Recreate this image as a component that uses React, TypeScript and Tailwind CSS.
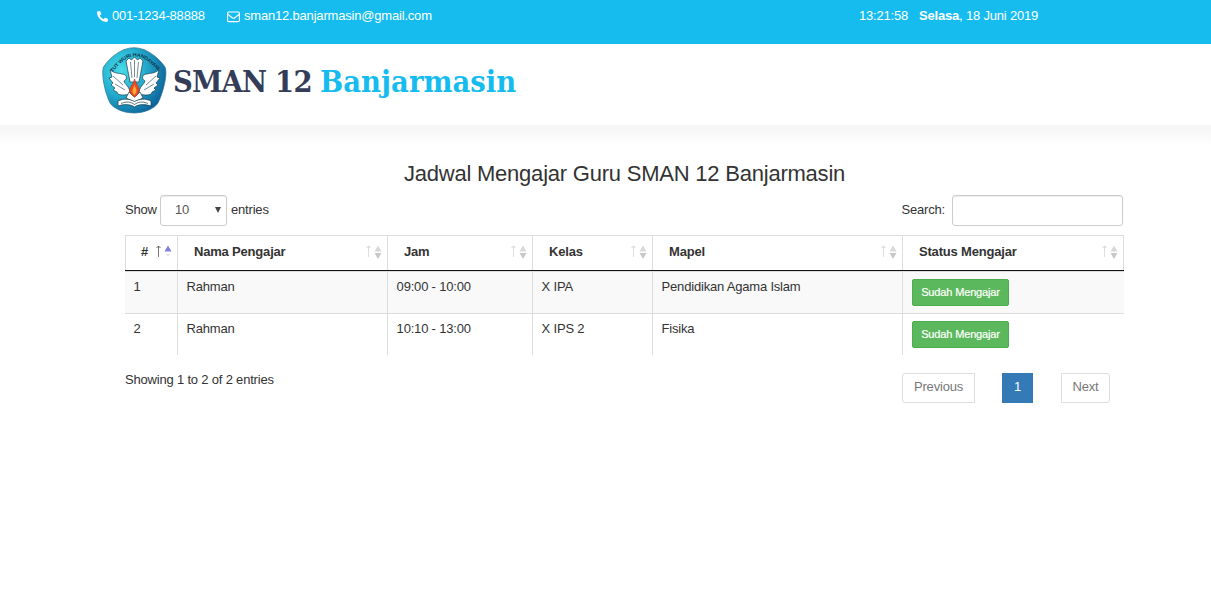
import React from "react";
import { FaPhone, FaRegEnvelope } from "react-icons/fa";

const columns = ["Nama Pengajar", "Jam", "Kelas", "Mapel", "Status Mengajar"];

const rows = [
  ["1", "Rahman", "09:00 - 10:00", "X IPA", "Pendidikan Agama Islam"],
  ["2", "Rahman", "10:10 - 13:00", "X IPS 2", "Fisika"],
];

function SchoolLogo() {
  return (
    <svg className="h-[67px] w-[65px] shrink-0" viewBox="0 0 65 67" fill="none">
      <defs>
        <radialGradient id="shield" cx="0.3" cy="0.35" r="0.75">
          <stop offset="0" stopColor="#45dbe8" />
          <stop offset="0.45" stopColor="#27b3d2" />
          <stop offset="1" stopColor="#0b6299" />
        </radialGradient>
        <path id="motto" d="M10.500 25.500C17 18 23 9.500 33 9.500C43 9.500 49 17 58 25.500" />
      </defs>
      <path
        d="M32 .7C44 .7 56 10 63 20C66 27 61 46 56 56C53 61 43 66 32 66C21 66 11 61 8 56C3 46-1 27 1.500 20C8 10 20 .7 32 .7Z"
        fill="url(#shield)"
        stroke="#2b7596"
        strokeWidth=".7"
      />
      <text fontSize="5" fontWeight="700" fill="#12384f" fontFamily="Liberation Sans, sans-serif">
        <textPath href="#motto" textLength="56" lengthAdjust="spacingAndGlyphs">TUT WURI HANDAYANI</textPath>
      </text>
      <g fill="#fff" stroke="#173e4d" strokeWidth=".7" strokeLinejoin="round">
        <path d="M28 47C20 49 15 48 15 45L11 43L13 41L9 38L11 36L7 31L10 30L8 23C14 27 17 26 20 27C25 27 26 32 22 34C23 38 28 39 28 47Z" />
        <path d="M37 47C45 49 50 48 50 45L54 43L52 41L56 38L54 36L58 31L55 30L57 23C51 27 48 26 45 27C40 27 39 32 43 34C42 38 37 39 37 47Z" />
        <path d="M24 14L27 11L29.500 13L32.500 10L35.500 13L38 11L41 14L37 35H28Z" />
        <path d="M27 45L32.500 50L38 45L41 51L32.500 55L24 51Z" />
        <path d="M16 54C22 51 28 52 32.500 54.500C37 52 43 51 49 54V59C42 57 37 57 32.500 60C28 57 22 57 16 59Z" />
      </g>
      <path d="M28.500 15L30 31M32.500 13V30M36.500 15L35 31M11 29L21 38M13 37L23 43M54 29L44 38M52 37L42 43" stroke="#173e4d" strokeWidth=".6" />
      <path d="M19 56.500C25 54 29 55 32.500 57.500C36 55 40 54 46 56.500" stroke="#173e4d" strokeWidth=".7" />
      <path d="M32.500 32C34 37 38 40 37 44C36.500 47 34 49 32.500 50C30 48 27.500 46 27.500 43C28 39 32 37 32.500 32Z" fill="#ef4b24" stroke="#a53421" strokeWidth=".6" />
      <path d="M32.500 38C34 42 36 44 32.500 48C29 45 31 42 32.500 38Z" fill="#ffad35" />
    </svg>
  );
}

function SortIcon({ active = false }: { active?: boolean }) {
  return (
    <svg
      className="absolute right-[5px] top-[9px] h-[14px] w-[17px]"
      viewBox="0 0 17 14"
      fill="none"
    >
      <path d="M3.500 1V12" stroke={active ? "#777" : "#dedede"} />
      <path d="M1.500 3L3.500 1L5.500 3" stroke={active ? "#444" : "#c8c8c8"} strokeWidth=".8" />
      <path d="M9.500 6.500L13 .5L16.500 6.500Z" fill={active ? "#7c80dc" : "#d8d8d8"} />
      {active ? (
        <path d="M11 9L13 11.500L15 9Z" fill="#ddd" />
      ) : (
        <path d="M9.500 8L13 14L16.500 8Z" fill="#c8c8c8" />
      )}
    </svg>
  );
}

export default function App() {
  return (
    <div className="min-h-[596px] w-[1211px] overflow-hidden bg-white font-['Liberation_Sans',Arial,sans-serif] text-[13px] leading-[18px] tracking-[-0.19px] text-[#333]">
      <div className="flex h-[44px] items-start bg-[#17bcef] pl-[97px] pt-[7px] text-white">
        <div className="flex w-[130px] items-center">
          <FaPhone className="mr-1 h-[11px] w-[11px] -scale-x-100 rotate-0" />
          <span>001-1234-88888</span>
        </div>
        <div className="flex w-[632px] items-center">
          <svg className="mr-1 h-[13px] w-[13px]" viewBox="0 0 13 13" fill="none" stroke="currentColor" strokeWidth="1.1">
            <rect x=".6" y="2" width="11.800" height="9.600" rx="1" />
            <path d="M.8 4.200L5.200 7.700Q6.500 8.600 7.800 7.700L12.200 4.200" />
          </svg>
          <span>sman12.banjarmasin@gmail.com</span>
        </div>
        <span className="w-[60px]">13:21:58</span>
        <span><b>Selasa</b>, 18 Juni 2019</span>
      </div>
      <header className="flex h-[81px] items-start pl-[102px] pt-[3px]">
        <SchoolLogo />
        <h1 className="ml-[6px] mt-[12px] flex whitespace-nowrap font-['DejaVu_Serif_Condensed','DejaVu_Serif',serif] text-[30.5px] font-bold leading-[44px] text-[#343d58]">
          <span className="w-[147px] tracking-[-0.8px]">SMAN 12</span>
          <span className="tracking-[0.05px] text-[#17bcef]">Banjarmasin</span>
        </h1>
      </header>
      <div className="h-[20px] bg-linear-to-b from-[#f5f5f5] to-white" />
      <main className="ml-[125px] w-[999px]">
        <h2 className="h-[50px] pt-[14px] text-center text-[22px] leading-[30px] tracking-[-0.22px]">
          Jadwal Mengajar Guru SMAN 12 Banjarmasin
        </h2>
        <div className="flex h-[40px] items-start justify-between pr-px">
          <div className="flex items-center">
            <span className="w-[35px] pb-[2px]">Show</span>
            <div className="flex h-[31px] w-[67px] items-center justify-between rounded-[3px] border border-[#ccc] pb-[2px] pl-[14px] pr-[5px] text-[#555] shadow-[inset_0_1px_1px_rgba(0,0,0,.08)]">
              <span>10</span>
              <svg className="h-[6px] w-[6px]" viewBox="0 0 6 6"><path d="M0 0H6L3 6Z" fill="#444" /></svg>
            </div>
            <span className="ml-1 pb-[2px]">entries</span>
          </div>
          <label className="flex items-center">
            <span className="pb-[2px]">Search:</span>
            <input className="ml-[7px] h-[31px] w-[171px] rounded-[3px] border border-[#ccc] px-2 shadow-[inset_0_1px_1px_rgba(0,0,0,.08)] outline-none" />
          </label>
        </div>
        <div className="grid h-[36px] grid-cols-[52px_210px_145px_120px_250px_222px] border-b border-[#111] font-bold">
          <div className="relative border-l border-t border-[#ddd] pl-[15px] pt-[7px]">
            #<SortIcon active />
          </div>
          {columns.map((c) => (
            <div key={c} className="relative border-l border-t border-[#ddd] pl-[16px] pt-[7px] last:border-r">
              {c}
              <SortIcon />
            </div>
          ))}
        </div>
        {rows.map((row) => (
          <div
            key={row[0]}
            className="grid h-[42px] grid-cols-[52px_210px_145px_120px_250px_222px] border-t border-[#ddd] nth-[4]:bg-[#f9f9f9]"
          >
            {row.map((cell, i) => (
              <div key={i} className="border-l border-[#ddd] pl-[8.600px] pt-[6px] first:border-l-0">{cell}</div>
            ))}
            <div className="border-l border-[#ddd] pl-[9px] pt-[7px]">
              <button className="block h-[27px] w-[97px] rounded-[2px] border border-[#4cae4c] bg-[#5cb85c] pb-px text-[11px] tracking-[-0.15px] text-white [-webkit-text-stroke:0.2px_white]">
                Sudah Mengajar
              </button>
            </div>
          </div>
        ))}
        <div className="flex justify-between pr-[14px] pt-[16px]">
          <span>Showing 1 to 2 of 2 entries</span>
          <div className="mt-[2px] flex h-[30px] text-[#777]">
            <span className="mr-[27px] w-[73px] rounded-l-[3px] border border-[#ddd] pt-[4px] text-center">Previous</span>
            <span className="mr-[28px] w-[31px] bg-[#337ab7] pt-[5px] text-center text-white">1</span>
            <span className="w-[49px] rounded-r-[3px] border border-[#ddd] pt-[4px] text-center">Next</span>
          </div>
        </div>
      </main>
    </div>
  );
}
